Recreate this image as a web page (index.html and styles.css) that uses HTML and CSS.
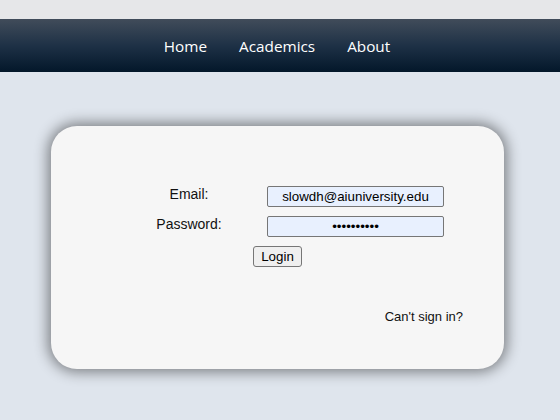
FILE: index.html
```html
<!DOCTYPE html>
<html>
<head>
<meta charset="utf-8">
<link rel="stylesheet" href="styles.css">
</head>
<body>
<div class="topband"></div>
<nav class="nav">
  <a class="nav-link">Home</a>
  <a class="nav-link">Academics</a>
  <a class="nav-link">About</a>
</nav>
<main class="main">
  <div class="card">
    <form class="form">
      <label class="label">Email:</label>
      <input class="field" type="text" value="slowdh@aiuniversity.edu">
      <label class="label">Password:</label>
      <input class="field" type="password" value="0123456789">
    </form>
    <div class="actions"><button class="btn" type="button">Login</button></div>
    <div class="help"><span class="help-link">Can't sign in?</span></div>
  </div>
</main>
</body>
</html>
```
FILE: styles.css
```css
html, body { margin: 0; padding: 0; }
body {
  width: 560px;
  height: 420px;
  overflow: hidden;
  background: #dfe5ed;
  font-family: "Liberation Sans", Arial, sans-serif;
  font-size: 14px;
  color: #111;
}
.topband { height: 19px; background: #e6e7e9; }
.nav {
  height: 53px;
  background: linear-gradient(to bottom, #414c5a 0%, #1e3146 50%, #03172a 100%);
  display: flex;
  justify-content: center;
  align-items: center;
  gap: 32px;
  padding-right: 6px;
}
.nav-link {
  color: #ffffff;
  font-family: "Open Sans", "Noto Sans", sans-serif;
  font-size: 15.3px;
  line-height: 20px;
}
.main { padding: 54px 0 0 51px; }
.card {
  width: 453px;
  height: 243px;
  box-sizing: border-box;
  background: #f6f6f6;
  border-radius: 26px;
  box-shadow: 0 0 14px 3px rgba(0,0,0,0.45);
  padding: 60px 41px 0 0;
}
.form {
  display: grid;
  grid-template-columns: 100px 177px;
  column-gap: 28px;
  row-gap: 9px;
  margin: 0 0 0 88px;
  align-items: center;
}
.label { text-align: center; position: relative; top: -3px; }
.field {
  box-sizing: border-box;
  width: 177px;
  height: 21px;
  margin: 0;
  padding: 0 4px;
  border: 1px solid #767676;
  border-radius: 2px;
  background: #e8f0fe;
  font-family: "Liberation Sans", Arial, sans-serif;
  font-size: 13.333px;
  text-align: center;
  color: #000;
}
.actions { display: flex; justify-content: center; padding-left: 41px; margin-top: 9px; }
.btn {
  box-sizing: border-box;
  height: 21px;
  width: 49px;
  padding: 0;
  border: 1px solid #767676;
  border-radius: 3px;
  background: #efefef;
  font-family: "Liberation Sans", Arial, sans-serif;
  font-size: 13.333px;
  color: #000;
}
.help { display: flex; justify-content: flex-end; margin-top: 42px; }
.help-link { font-size: 13px; line-height: 16px; }
```
